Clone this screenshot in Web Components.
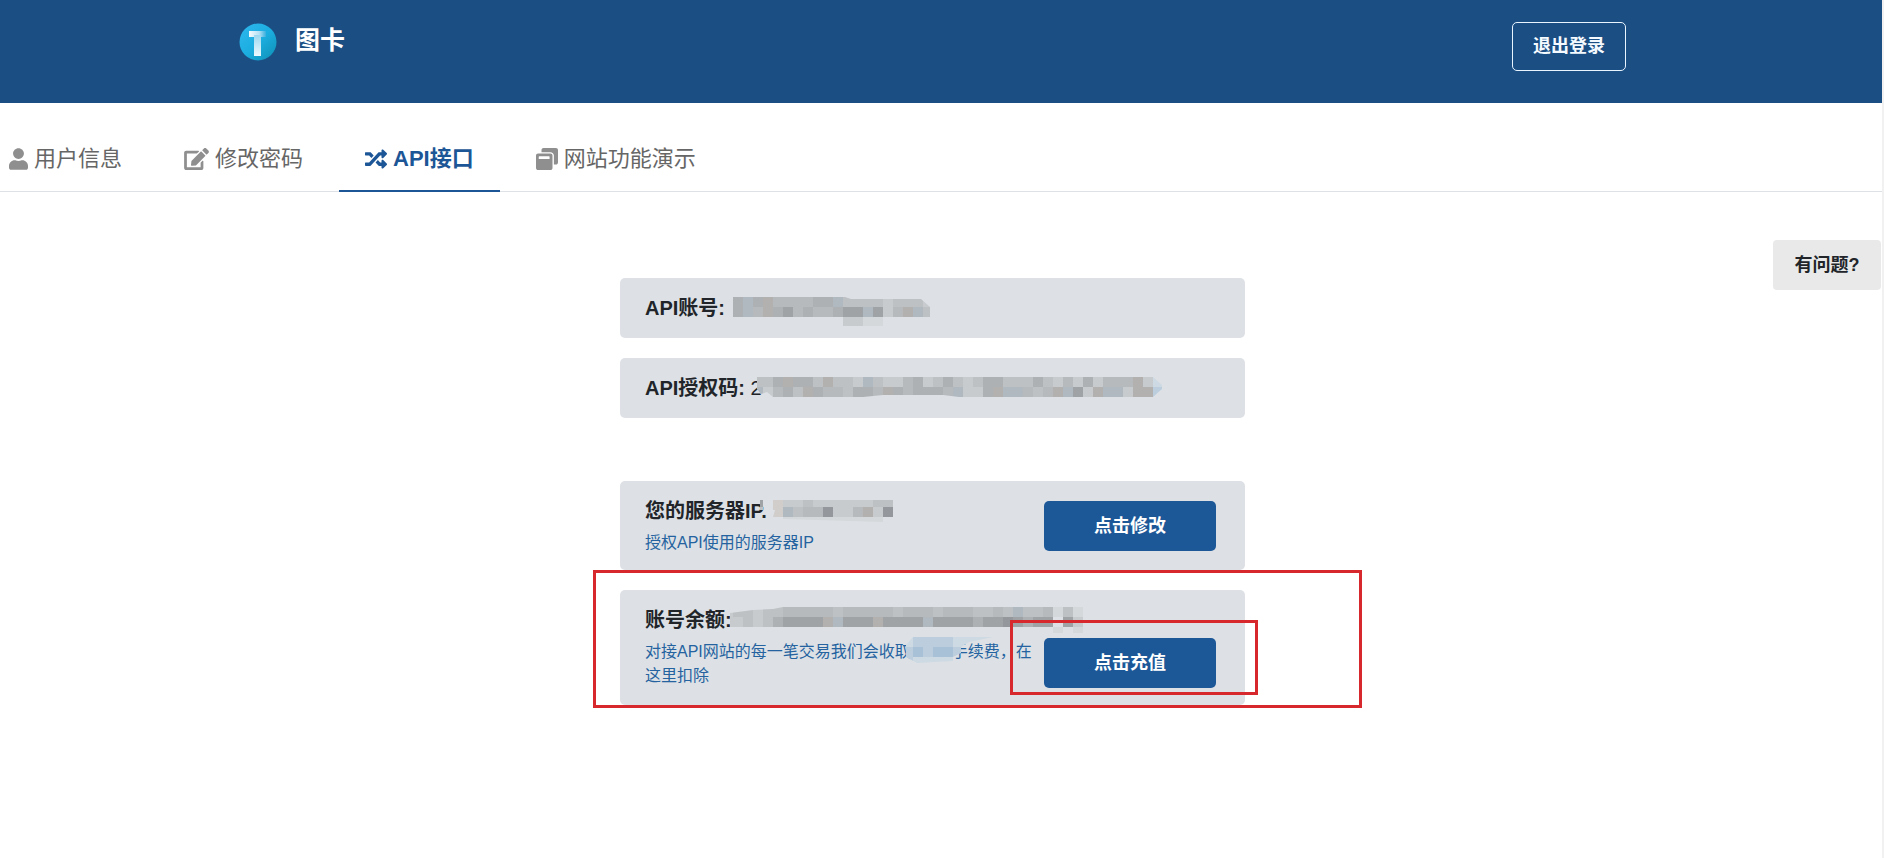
<!DOCTYPE html>
<html lang="zh-CN">
<head>
<meta charset="utf-8">
<meta name="viewport" content="width=device-width, initial-scale=1">
<title>图卡</title>
<style>
  html { background: #fff; }
  body {
    margin: 0;
    min-height: 100vh;
    box-sizing: border-box;
    border-right: 2px solid #f1f1f1;
    position: relative;
    color: #212529;
    font-family: "Liberation Sans", "Noto Sans CJK SC", sans-serif;
    font-size: 16px;
    line-height: 24px;
  }
</style>
</head>
<body>
<site-header></site-header>
<tab-bar>
  <tab-item icon="user">用户信息</tab-item>
  <tab-item icon="edit">修改密码</tab-item>
  <tab-item icon="shuffle" active>API接口</tab-item>
  <tab-item icon="clone">网站功能演示</tab-item>
</tab-bar>
<api-panel></api-panel>
<help-button>有问题?</help-button>

<script>
class BaseElement extends HTMLElement {
  connectedCallback() {
    if (!this.shadowRoot) this.attachShadow({ mode: 'open' }).innerHTML = this.render();
  }
}

customElements.define('site-header', class extends BaseElement {
  render() {
    return `<style>
      :host { display: block; background: #1b4e83; padding: 22px 17px 32px 0; }
      .bar { max-width: 1387px; margin: 0 auto; display: flex; justify-content: space-between; align-items: flex-start; }
      .brand { display: flex; align-items: flex-start; gap: 18px; color: #fff; text-decoration: none; font-size: 25px; font-weight: 700; line-height: 36px; }
      svg { display: block; margin-top: 1px; }
      button { font: inherit; font-size: 18px; font-weight: 700; line-height: 27px; color: #f4faff; background: none; border: 1px solid #e8f4ff; border-radius: 5px; padding: 10px 20px; width: 114px; height: 49px; white-space: nowrap; }
    </style>
    <header class="bar">
      <a class="brand" href="#">
        <svg width="38" height="38" viewBox="0 0 38 38" aria-hidden="true">
          <defs>
            <linearGradient id="disc" x1="0" y1="0" x2="1" y2="1"><stop offset="0" stop-color="#2fb7ef"/><stop offset=".5" stop-color="#1caee0"/><stop offset="1" stop-color="#0d8fb4"/></linearGradient>
            <linearGradient id="top" x1="0" x2="1"><stop offset="0" stop-color="#f4fbff"/><stop offset=".6" stop-color="#b5e1f3"/><stop offset="1" stop-color="#35aede"/></linearGradient>
            <linearGradient id="stem" x1="0" x2="0" y1="0" y2="1"><stop offset="0" stop-color="#9ad7ef"/><stop offset="1" stop-color="#eefaff"/></linearGradient>
          </defs>
          <circle cx="19" cy="19" r="18.5" fill="url(#disc)"/>
          <rect x="10" y="8" width="17" height="6" fill="url(#top)"/>
          <rect x="15" y="12" width="7" height="21" fill="url(#stem)"/>
        </svg><span>图卡</span></a>
      <button type="button">退出登录</button>
    </header>`;
  }
});

customElements.define('tab-bar', class extends BaseElement {
  render() {
    return `<style>
      :host { display: block; border-bottom: 1px solid #dee2e6; padding: 40px 0 0 9px; }
      nav { display: flex; gap: 10px; margin-bottom: -1px; }
      ::slotted(:first-child) { --pad-start: 0px; }
    </style><nav><slot></slot></nav>`;
  }
});

const ICONS = {
  user: [19, '0 0 448 512', 'M224 256c70.7 0 128-57.3 128-128S294.700 0 224 0 96 57.300 96 128s57.300 128 128 128zm89.600 32h-16.700c-22.200 10.200-46.900 16-72.900 16s-50.600-5.800-72.900-16h-16.700C60.200 288 0 348.200 0 422.400V464c0 26.500 21.500 48 48 48h352c26.500 0 48-21.500 48-48v-41.600c0-74.200-60.200-134.400-134.400-134.400z'],
  edit: [25, '0 0 576 512', 'M402.600 83.200l90.200 90.200c3.800 3.800 3.800 10 0 13.800L274.400 405.600l-92.800 10.300c-12.400 1.400-22.900-9.100-21.500-21.500l10.300-92.800L388.800 83.200c3.800-3.800 10-3.800 13.800 0zm162-22.900l-48.800-48.800c-15.200-15.200-39.900-15.200-55.200 0l-35.400 35.400c-3.800 3.800-3.800 10 0 13.800l90.200 90.200c3.800 3.800 10 3.800 13.800 0l35.400-35.400c15.200-15.300 15.200-40 0-55.200zM384 346.200V448H64V128h229.800c3.200 0 6.200-1.300 8.500-3.500l40-40c7.600-7.600 2.200-20.500-8.500-20.500H48C21.500 64 0 85.500 0 112v352c0 26.500 21.500 48 48 48h352c26.500 0 48-21.500 48-48V306.200c0-10.700-12.900-16-20.500-8.500l-40 40c-2.200 2.300-3.500 5.300-3.500 8.500z'],
  shuffle: [22, '0 0 512 512', 'M504.971 359.029c9.373 9.373 9.373 24.569 0 33.941l-80 79.984c-15.010 15.010-40.971 4.490-40.971-16.971V416h-58.785a12.004 12.004 0 0 1-8.773-3.812l-70.556-75.596 53.333-57.143L352 336h32v-39.981c0-21.438 25.943-31.998 40.971-16.971l80 79.981zM12 176h84l52.781 56.551 53.333-57.143-70.556-75.596A11.999 11.999 0 0 0 122.785 96H12c-6.627 0-12 5.373-12 12v56c0 6.627 5.373 12 12 12zm372 0v39.984c0 21.460 25.961 31.980 40.971 16.971l80-79.984c9.373-9.373 9.373-24.569 0-33.941l-80-79.981C409.943 24.021 384 34.582 384 56.019V96h-58.785a12.004 12.004 0 0 0-8.773 3.812L96 336H12c-6.627 0-12 5.373-12 12v56c0 6.627 5.373 12 12 12h110.785c3.326 0 6.503-1.381 8.773-3.812L352 176h32z'],
  clone: [22, '0 0 512 512', 'M512 48v288c0 26.500-21.500 48-48 48h-48V176c0-44.100-35.900-80-80-80H128V48c0-26.500 21.500-48 48-48h288c26.500 0 48 21.500 48 48zM384 176v288c0 26.500-21.500 48-48 48H48c-26.500 0-48-21.500-48-48V176c0-26.500 21.500-48 48-48h288c26.500 0 48 21.500 48 48zm-68 28c0-6.600-5.400-12-12-12H76c-6.600 0-12 5.400-12 12v52h252v-52z']
};

customElements.define('tab-item', class extends BaseElement {
  render() {
    const [width, box, path] = ICONS[this.getAttribute('icon')];
    return `<style>
      :host { display: block; }
      a { display: flex; align-items: center; gap: 6px; padding: 0 26px 15px var(--pad-start, 26px); border-bottom: 2px solid transparent; color: #666; font-size: 22px; line-height: 32px; text-decoration: none; white-space: nowrap; }
      svg { display: block; fill: #8f8f8f; }
      :host([active]) a { color: #1c5696; font-weight: 700; border-color: #1c5696; }
      :host([active]) svg { fill: #1c5696; }
    </style>
    <a href="#"><svg width="${width}" height="22" viewBox="${box}" aria-hidden="true"><path d="${path}"/></svg><span><slot></slot></span></a>`;
  }
});

customElements.define('help-button', class extends BaseElement {
  render() {
    return `<style>
      :host { display: block; position: absolute; top: 240px; right: 1px; }
      button { width: 108px; height: 50px; border: 0; border-radius: 4px; background: #e9e9e9; color: #212529; font: inherit; font-size: 18px; font-weight: 700; padding: 0; }
    </style><button type="button"><slot></slot></button>`;
  }
});

/* Mosaic that hides private values: each letter of "rows" is one 10px tile. */
const TILES = { a: '#b6babd', b: '#adb1b4', c: '#bdc1c4', d: '#a0a3a6', e: '#c7cbce', f: '#b0b8c0', g: '#b3b1b0', h: '#94979b', i: '#d5d8da', j: '#d1cdcb', k: '#a9c1d7', l: '#bccede', m: '#cdd9e3' };
customElements.define('pixel-mask', class extends BaseElement {
  render() {
    const rows = this.getAttribute('rows').split(' ');
    const w = Math.max(...rows.map(r => r.length)) * 10, h = rows.length * 10;
    const tiles = rows.map((row, y) => [...row].map((t, x) => TILES[t] ? `<rect x="${x * 10}" y="${y * 10}" width="10" height="10" fill="${TILES[t]}"/>` : '').join('')).join('');
    return `<style>
      :host { display: block; position: absolute; }
      svg { display: block; }
    </style><svg width="${w}" height="${h}" shape-rendering="crispEdges" aria-hidden="true">${tiles}</svg>`;
  }
});

/* Red frame drawn round a part of the page. */
customElements.define('mark-frame', class extends BaseElement {
  render() {
    return `<style>:host { display: block; position: absolute; z-index: 2; box-sizing: border-box; border: 3px solid #d7282e; pointer-events: none; }</style>`;
  }
});

customElements.define('info-card', class extends BaseElement {
  render() {
    return `<style>
      :host { display: block; position: relative; background: #dde1e5; border-radius: 5px; padding: 15px 29px 15px 25px; }
      .row { display: flex; justify-content: space-between; align-items: center; gap: 8px; }
      :host([low-action]) { padding-bottom: 17px; }
      :host([low-action]) .row { align-items: flex-end; }
      .text { flex: 1; min-width: 0; }
      h2 { margin: 0; font-size: 20px; line-height: 30px; font-weight: 700; white-space: nowrap; }
      .note { color: #2563a0; line-height: 24px; }
      ::slotted([slot=note]) { display: block; padding-top: 5px; }
    </style>
    <div class="row">
      <div class="text"><h2><slot name="title"></slot></h2><div class="note"><slot name="note"></slot></div></div>
      <slot name="action"></slot>
    </div>
    <slot></slot>`;
  }
});

customElements.define('action-button', class extends BaseElement {
  render() {
    return `<style>
      :host { display: block; position: relative; }
      button { display: block; width: 172px; height: 50px; border: 0; border-radius: 5px; background: #1c5797; color: #fff; font: inherit; font-size: 18px; font-weight: 700; padding: 0; }
    </style><button type="button"><slot></slot></button><slot name="frame"></slot>`;
  }
});

customElements.define('api-panel', class extends BaseElement {
  render() {
    return `<style>
      :host { display: block; padding: 86px 17px 0 0; }
      main { max-width: 625px; margin: 0 auto; }
      section { display: grid; gap: 20px; }
      section + section { margin-top: 63px; }
      .value { font-weight: 400; }
      #account { left: 113px; top: 19px; clip-path: polygon(0 0, 112px 0, 118px 2px, 188px 2px, 197px 10px, 197px 20px, 150px 20px, 150px 29px, 110px 29px, 110px 20px, 0 20px); }
      #code { left: 133px; top: 19px; clip-path: polygon(4px 0, 400px 0, 409px 8px, 409px 12px, 400px 20px, 206px 20px, 190px 18px, 130px 18px, 110px 20px, 20px 20px, 14px 15px, 8px 17px, 4px 12px); }
      #ip { left: 133px; top: 16px; clip-path: polygon(7px 3px, 140px 3px, 140px 20px, 130px 20px, 130px 25px, 30px 22px, 20px 20px, 22px 13px, 7px 13px); }
      #balance { left: 103px; top: 17px; clip-path: polygon(7px 6px, 30px 3px, 50px 2px, 60px 0, 360px 0, 360px 26px, 330px 26px, 330px 20px, 7px 20px); }
      #fee { left: 283px; top: 47px; clip-path: polygon(10px 0, 90px 0, 66px 5px, 58px 10px, 58px 16px, 50px 20px, 50px 24px, 14px 26px, 3px 20px, 3px 8px); }
      #fee-frame { inset: -18px -42px -7px -34px; }
      #card-frame { inset: -20px -117px -3px -27px; }
    </style>
    <main>
      <section>
        <info-card><span slot="title">API账号:</span>
          <pixel-mask id="account" rows="bfbgaaaabbfcccceccce bfagbdabaabddfdeagfc ...........eeii"></pixel-mask></info-card>
        <info-card><span slot="title">API授权码: <span class="value">2</span></span>
          <pixel-mask id="code" rows="ccbgbbcgccefceeabecbcecbbcccbceaebeaaagem feabcgbaacbbagbabbbafeebgffacagfdegffeggl"></pixel-mask></info-card>
      </section>
      <section>
        <info-card><span slot="title">您的服务器IP.</span><span slot="note">授权API使用的服务器IP</span>
          <action-button slot="action">点击修改</action-button>
          <pixel-mask id="ip" rows="d.jeeceeeeeecc c.jfcaaheeageh ...iiiiiiiiiii"></pixel-mask></info-card>
        <info-card low-action><span slot="title">账号余额:</span>
          <span slot="note">对接API网站的每一笔交易我们会收取&#x3000;&#x3000;&nbsp;&nbsp;手续费，在这里扣除</span>
          <action-button slot="action">点击充值<mark-frame slot="frame" id="fee-frame"></mark-frame></action-button>
          <pixel-mask id="balance" rows="ecceccaaaaacaaaaacaaacaaaccacfccaici eececbddddgfdddgddddfddddbddhdbdd.de .................................i.i"></pixel-mask>
          <pixel-mask id="fee" rows="mllllmmmm lklkkl lmmmmm"></pixel-mask>
          <mark-frame id="card-frame"></mark-frame></info-card>
      </section>
    </main>`;
  }
});
</script>
</body>
</html>
